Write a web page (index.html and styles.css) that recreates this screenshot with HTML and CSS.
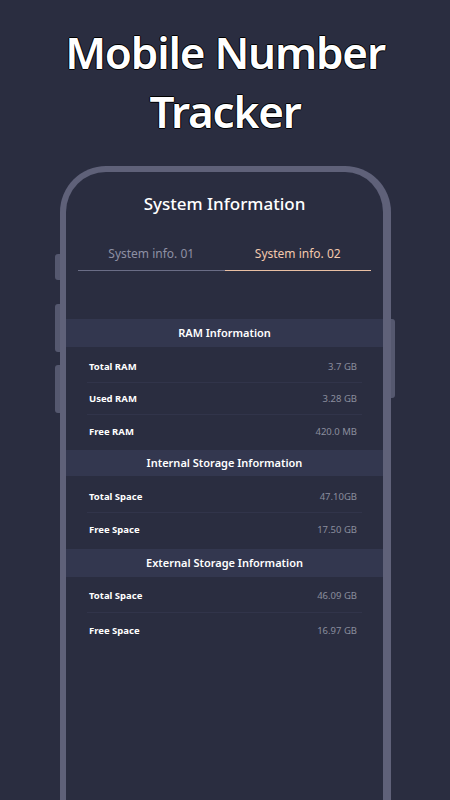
FILE: index.html
```html
<!DOCTYPE html>
<html lang="en">
<head>
<meta charset="utf-8">
<title>Mobile Number Tracker</title>
<link rel="stylesheet" href="styles.css">
</head>
<body>
<h1 class="headline">Mobile Number<br>Tracker</h1>
<div class="phone">
  <span class="btn btn-l1"></span>
  <span class="btn btn-l2"></span>
  <span class="btn btn-l3"></span>
  <span class="btn btn-r1"></span>
  <div class="screen">
    <h2 class="screen-title">System Information</h2>
    <div class="tabs">
      <div class="tab">System info. 01</div>
      <div class="tab active">System info. 02</div>
    </div>
    <section class="group">
      <div class="group-head">RAM Information</div>
      <div class="rows rows-ram">
        <div class="row"><span class="label">Total RAM</span><span class="value">3.7 GB</span></div>
        <div class="row"><span class="label">Used RAM</span><span class="value">3.28 GB</span></div>
        <div class="row"><span class="label">Free RAM</span><span class="value">420.0 MB</span></div>
      </div>
    </section>
    <section class="group">
      <div class="group-head group-head-thin">Internal Storage Information</div>
      <div class="rows rows-int">
        <div class="row"><span class="label">Total Space</span><span class="value">47.10GB</span></div>
        <div class="row"><span class="label">Free Space</span><span class="value">17.50 GB</span></div>
      </div>
    </section>
    <section class="group">
      <div class="group-head">External Storage Information</div>
      <div class="rows rows-ext">
        <div class="row row-tall"><span class="label">Total Space</span><span class="value">46.09 GB</span></div>
        <div class="row row-tall"><span class="label">Free Space</span><span class="value">16.97 GB</span></div>
      </div>
    </section>
  </div>
</div>
</body>
</html>
```

FILE: styles.css
```css
html, body {
  margin: 0;
  padding: 0;
  background: #2a2d40;
  height: 800px;
  overflow: hidden;
}

body {
  font-family: "Noto Sans", "Open Sans", sans-serif;
  color: #ffffff;
}

.headline {
  margin: 23px 0 0;
  text-align: center;
  font-size: 44px;
  line-height: 59px;
  font-weight: 600;
  color: #ffffff;
  letter-spacing: -1.2px;
  text-shadow: 1px 0 0 #000, -1px 0 0 #000, 0 1px 0 #000, 0 -1px 0 #000;
}

.phone {
  position: relative;
  box-sizing: border-box;
  width: 331px;
  height: 634px;
  margin: 25px 0 0 60px;
  border: 6px solid #5f6179;
  border-right-width: 8px;
  border-bottom: none;
  border-radius: 46px 46px 0 0;
  background: #2a2d40;
}

.btn {
  position: absolute;
  width: 5px;
  background: #55586f;
}

.btn-l1 { left: -11px; top: 82px; height: 26px; border-radius: 3px 0 0 3px; }
.btn-l2 { left: -11px; top: 132px; height: 48px; border-radius: 3px 0 0 3px; }
.btn-l3 { left: -11px; top: 193px; height: 48px; border-radius: 3px 0 0 3px; }
.btn-r1 { right: -12px; top: 147px; height: 79px; width: 4px; border-radius: 0 3px 3px 0; }

.screen {
  padding-top: 20px;
}

.screen-title {
  margin: 0;
  text-align: center;
  font-size: 17px;
  line-height: 24px;
  font-weight: 500;
  color: #ffffff;
}

.tabs {
  display: flex;
  margin: 29px 12px 0 12px;
}

.tab {
  flex: 1;
  text-align: center;
  font-size: 12px;
  line-height: 18px;
  padding-bottom: 7px;
  color: #8e90a4;
  border-bottom: 1.5px solid #6a6d86;
}

.tab.active {
  color: #f3c9ad;
  border-bottom-color: #e9bfa3;
}

.tabs + .group {
  margin-top: 48px;
}

.group-head {
  background: #33374f;
  text-align: center;
  font-size: 11px;
  font-weight: 600;
  line-height: 28px;
  height: 28px;
  color: #ffffff;
}

.group-head-thin {
  line-height: 26px;
  height: 26px;
}

.rows {
  padding: 0 21px;
}

.rows-ram { padding-top: 4px; padding-bottom: 3px; }
.rows-int { padding-top: 5px; padding-bottom: 4px; }
.rows-ext { padding-top: 2px; padding-bottom: 4px; }

.row {
  display: flex;
  justify-content: space-between;
  align-items: center;
  height: 32px;
  padding: 0 5px 0 2px;
  border-bottom: 1px solid #31344a;
  box-sizing: border-box;
}

.row:last-child {
  border-bottom: none;
}

.row-tall {
  height: 34px;
}

.label {
  font-size: 9.5px;
  font-weight: 700;
  color: #ffffff;
}

.value {
  font-size: 9.5px;
  color: #8b8d9e;
}
```
